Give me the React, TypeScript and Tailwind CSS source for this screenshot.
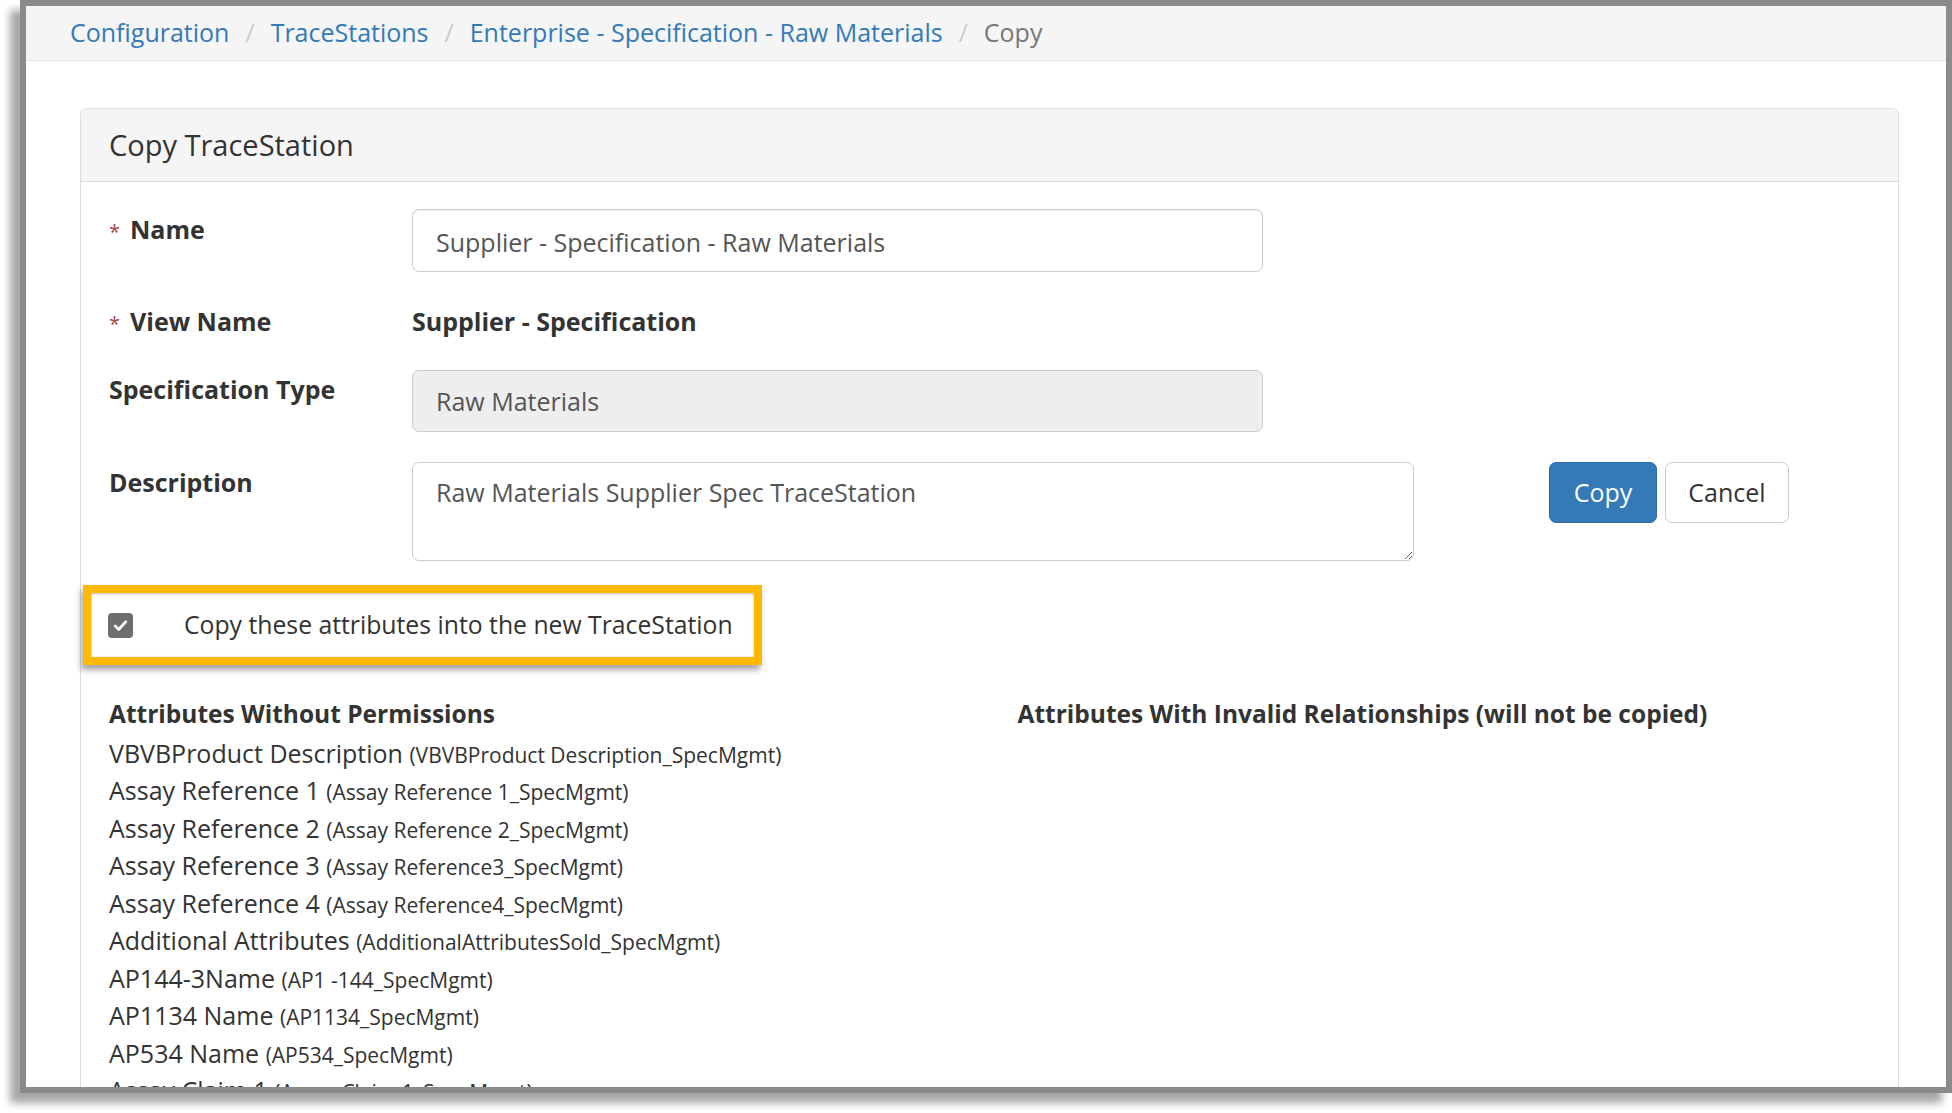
const font = { fontFamily: '"Open Sans", "Noto Sans", sans-serif' };

const attributes = [
  ["VBVBProduct Description", "VBVBProduct Description_SpecMgmt"],
  ["Assay Reference 1", "Assay Reference 1_SpecMgmt"],
  ["Assay Reference 2", "Assay Reference 2_SpecMgmt"],
  ["Assay Reference 3", "Assay Reference3_SpecMgmt"],
  ["Assay Reference 4", "Assay Reference4_SpecMgmt"],
  ["Additional Attributes", "AdditionalAttributesSold_SpecMgmt"],
  ["AP144-3Name", "AP1 -144_SpecMgmt"],
  ["AP1134 Name", "AP1134_SpecMgmt"],
  ["AP534 Name", "AP534_SpecMgmt"],
  ["Assay Claim 1", "Assay Claim 1_SpecMgmt"],
];

const crumbs = ["Configuration", "TraceStations", "Enterprise - Specification - Raw Materials"];

const Required = () => (
  <span className="mr-[10px] text-[20px] font-normal text-[#a94442]">*</span>
);

export default function App() {
  return (
    <div className="h-[1113px] w-[1952px] overflow-hidden bg-white text-[#333]" style={font}>
      <div className="ml-[20px] h-[1093px] overflow-hidden border-[6px] border-[#8a8a8a] bg-white shadow-[-10px_10px_8px_rgba(0,0,0,0.35)]">
        {/* breadcrumb */}
        <div className="flex h-[55px] items-center border-b border-[#e3e3e3] bg-[#f5f5f5] pl-[44px] text-[25px]">
          {crumbs.map((c) => (
            <span key={c} className="flex items-center">
              <span className="text-[#337ab7]">{c}</span>
              <span className="px-[16px] text-[#ccc]">/</span>
            </span>
          ))}
          <span className="text-[#777]">Copy</span>
        </div>

        {/* panel */}
        <div className="mt-[47px] ml-[54px] mr-[47px] rounded-t-[7px] border border-[#ddd]">
          <div className="flex h-[73px] items-center rounded-t-[7px] border-b border-[#ddd] bg-[#f5f5f5] px-[28px] text-[29px]">
            Copy TraceStation
          </div>

          <div className="px-[28px] pt-[27px]">
            <div className="flex items-start">
              <label className="w-[303px] pt-[2px] text-[25px] leading-[36px] font-bold">
                <Required />
                Name
              </label>
              <input
                readOnly
                defaultValue="Supplier - Specification - Raw Materials"
                className="h-[63px] w-[851px] rounded-[7px] border border-[#ccc] px-[23px] pt-[2px] text-[25px] text-[#555] shadow-[inset_0_1px_1px_rgba(0,0,0,0.075)] outline-none"
              />
            </div>

            <div className="mt-[31px] flex items-start">
              <label className="w-[303px] text-[25px] leading-[36px] font-bold">
                <Required />
                View Name
              </label>
              <span className="text-[25px] leading-[36px] font-bold">Supplier - Specification</span>
            </div>

            <div className="mt-[28px] flex items-start">
              <label className="w-[303px] pt-[1px] text-[25px] leading-[36px] font-bold">
                Specification Type
              </label>
              <input
                readOnly
                disabled
                defaultValue="Raw Materials"
                className="h-[62px] w-[851px] rounded-[7px] border border-[#ccc] bg-[#eee] px-[23px] text-[25px] text-[#555] outline-none"
              />
            </div>

            <div className="mt-[30px] flex items-start">
              <label className="w-[303px] pt-[2px] text-[25px] leading-[36px] font-bold">
                Description
              </label>
              <textarea
                readOnly
                defaultValue="Raw Materials Supplier Spec TraceStation"
                className="h-[99px] w-[1002px] rounded-[7px] border border-[#ccc] px-[23px] py-[11px] text-[25px] leading-[36px] text-[#555] outline-none"
              />
              <div className="ml-[135px] flex gap-[8px]">
                <button className="h-[61px] w-[108px] rounded-[7px] border border-[#2e6da4] bg-[#337ab7] text-[25px] text-white">
                  Copy
                </button>
                <button className="h-[61px] w-[124px] rounded-[7px] border border-[#ccc] bg-white text-[25px] text-[#333]">
                  Cancel
                </button>
              </div>
            </div>

            {/* highlighted checkbox */}
            <div className="mt-[24px] -ml-[26px] flex h-[80px] w-[679px] items-center border-[8px] border-[#ffb900] pl-[17px] shadow-[-2px_5px_6px_rgba(0,0,0,0.35),inset_0_1px_3px_rgba(0,0,0,0.25)]">
              <span className="flex h-[25px] w-[25px] items-center justify-center rounded-[4px] bg-[#6e6e6e]">
                <svg width="17" height="17" viewBox="0 0 16 16" fill="none">
                  <path d="M3 8.5 6.3 11.8 13 4.5" stroke="white" strokeWidth="2.6" strokeLinecap="round" strokeLinejoin="round" />
                </svg>
              </span>
              <span className="ml-[51px] text-[24.75px] text-[#333]">Copy these attributes into the new TraceStation</span>
            </div>

            {/* attributes */}
            <div className="mt-[30px] grid grid-cols-2">
              <div>
                <div className="mb-[2px] text-[24.5px] leading-[37.5px] font-bold">Attributes Without Permissions</div>
                {attributes.map(([name, code]) => (
                  <div key={name} className="h-[37.5px] text-[25px] leading-[37.5px]">
                    {name} <span className="text-[21px] leading-none">({code})</span>
                  </div>
                ))}
              </div>
              <div className="pl-[28px]">
                <div className="text-[24.5px] leading-[37.5px] font-bold">
                  Attributes With Invalid Relationships (will not be copied)
                </div>
              </div>
            </div>
          </div>
        </div>
      </div>
    </div>
  );
}
